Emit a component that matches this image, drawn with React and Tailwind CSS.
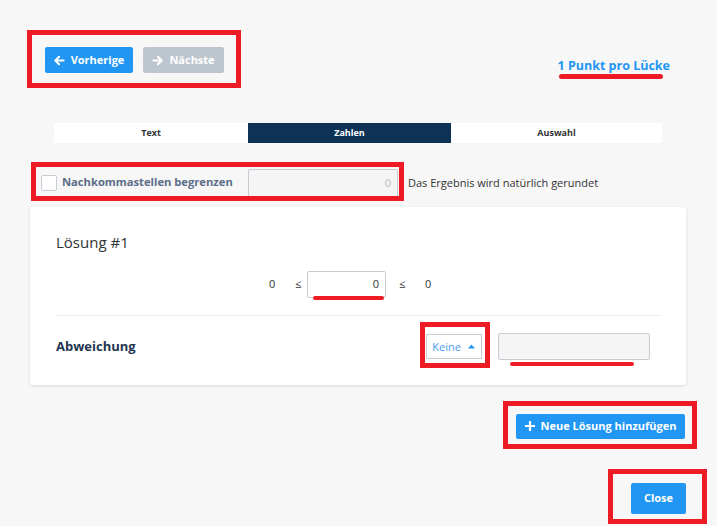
import React from "react";

const Arrow = ({ dir }) => (
  <svg width="11" height="11" viewBox="0 0 12 12" fill="none" stroke="currentColor" strokeWidth="2.2" strokeLinecap="round" strokeLinejoin="round">
    {dir === "left" ? (
      <>
        <path d="M10.5 6H1.8" />
        <path d="M5.5 2L1.5 6l4 4" />
      </>
    ) : (
      <>
        <path d="M1.5 6h8.7" />
        <path d="M6.5 2l4 4-4 4" />
      </>
    )}
  </svg>
);

export default function App() {
  return (
    <div
      className="relative w-[717px] h-[526px] overflow-hidden bg-[#f7f7f7] text-[#333]"
      style={{ fontFamily: '"Open Sans", "Noto Sans", sans-serif' }}
    >
      {/* top row */}
      <div className="flex items-start justify-between pl-[45px] pr-[47px] pt-[47px]">
        <div className="flex gap-[10px]">
          <button className="flex h-[26px] w-[88px] items-center justify-center gap-[6px] rounded-[2px] bg-[#2196f3] text-[11px] font-bold text-white">
            <Arrow dir="left" />
            Vorherige
          </button>
          <button className="flex h-[26px] w-[81px] items-center justify-center gap-[6px] rounded-[2px] bg-[#bdc5cf] text-[11px] font-bold text-white">
            <Arrow dir="right" />
            Nächste
          </button>
        </div>
        <div className="mt-[10px] text-[12.5px] font-bold text-[#2196f3]">1 Punkt pro Lücke</div>
      </div>

      {/* tabs */}
      <div className="ml-[54px] mt-[47px] flex h-[20px] w-[608px] text-[9px] font-bold">
        <div className="flex w-[194px] items-center justify-center bg-white text-[#333]">Text</div>
        <div className="flex w-[203px] items-center justify-center bg-[#0e3356] text-white">Zahlen</div>
        <div className="flex w-[211px] items-center justify-center bg-white text-[#333]">Auswahl</div>
      </div>

      {/* decimals row */}
      <div className="ml-[41px] mt-[26px] flex h-[28px] items-center">
        <div className="h-[16px] w-[16px] rounded-[2px] border border-[#c5ccd4] bg-white" />
        <div className="ml-[5px] w-[186px] text-[11.2px] font-bold text-[#5b6d88]">Nachkommastellen begrenzen</div>
        <div className="flex h-[28px] w-[150px] items-center justify-end rounded-[2px] border border-[#c5ccd4] bg-[#f5f5f5] pr-[6px] text-[11px] text-[#b5bcc4]">
          0
        </div>
        <div className="ml-[10px] text-[11px] text-[#333]">Das Ergebnis wird natürlich gerundet</div>
      </div>

      {/* card */}
      <div className="ml-[30px] mt-[10px] h-[178px] w-[656px] rounded-[3px] bg-white pl-[26px] pr-[26px] shadow-[0_1px_3px_rgba(0,0,0,0.12)]">
        <div className="pt-[24px] text-[15px] leading-[22px] text-[#333]">Lösung #1</div>
        <div className="mt-[18px] flex h-[27px] items-center text-[11px] text-[#333]">
          <span className="ml-[213px] w-[10px]">0</span>
          <span className="ml-[16px] w-[10px]">≤</span>
          <div className="ml-[2px] flex h-[27px] w-[79px] items-center justify-end rounded-[2px] border border-[#c5ccd4] bg-white pr-[6px]">0</div>
          <span className="ml-[13px] w-[10px]">≤</span>
          <span className="ml-[16px]">0</span>
        </div>
        <div className="mt-[17px] h-px bg-[#ececec]" />
        <div className="flex h-[62px] items-center">
          <div className="text-[13px] font-bold text-[#1f3550]">Abweichung</div>
          <div className="ml-[290px] flex h-[25px] w-[56px] items-center justify-center gap-[7px] border border-[#c5ccd4] bg-white text-[11px] text-[#4a9bf0]">
            Keine
            <svg width="7" height="5" viewBox="0 0 7 5"><path d="M0 4.5L3.5 0.5 7 4.5z" fill="#2196f3" /></svg>
          </div>
          <div className="ml-[16px] h-[27px] w-[152px] rounded-[2px] border border-[#c5ccd4] bg-[#f5f5f5]" />
        </div>
      </div>

      {/* add solution */}
      <div className="mt-[29px] flex justify-end pr-[32px]">
        <button className="flex h-[25px] w-[169px] items-center justify-center gap-[6px] rounded-[2px] bg-[#2196f3] text-[11px] font-bold text-white">
          <svg width="10" height="10" viewBox="0 0 10 10" stroke="white" strokeWidth="2.2"><path d="M5 0v10M0 5h10" /></svg>
          Neue Lösung hinzufügen
        </button>
      </div>

      <div className="mt-[44px] flex justify-end pr-[31px]">
        <button className="flex h-[31px] w-[55px] items-center justify-center rounded-[2px] bg-[#2196f3] text-[11px] font-bold text-white">
          Close
        </button>
      </div>

      {/* red annotations */}
      <div className="pointer-events-none absolute left-[27px] top-[30px] h-[58px] w-[214px] border-[5px] border-[#ed1c24]" />
      <div className="pointer-events-none absolute left-[559px] top-[74px] h-[5px] w-[104px] rounded-full bg-[#ed1c24]" />
      <div className="pointer-events-none absolute left-[31px] top-[162px] h-[39px] w-[373px] border-[5px] border-[#ed1c24]" />
      <div className="pointer-events-none absolute left-[313px] top-[296px] h-[4px] w-[71px] rounded-full bg-[#ed1c24]" />
      <div className="pointer-events-none absolute left-[420px] top-[322px] h-[46px] w-[70px] border-[5px] border-[#ed1c24]" />
      <div className="pointer-events-none absolute left-[510px] top-[362px] h-[4px] w-[124px] rounded-full bg-[#ed1c24]" />
      <div className="pointer-events-none absolute left-[503px] top-[401px] h-[48px] w-[194px] border-[5px] border-[#ed1c24]" />
      <div className="pointer-events-none absolute left-[608px] top-[469px] h-[55px] w-[99px] border-[5px] border-[#ed1c24]" />
    </div>
  );
}
